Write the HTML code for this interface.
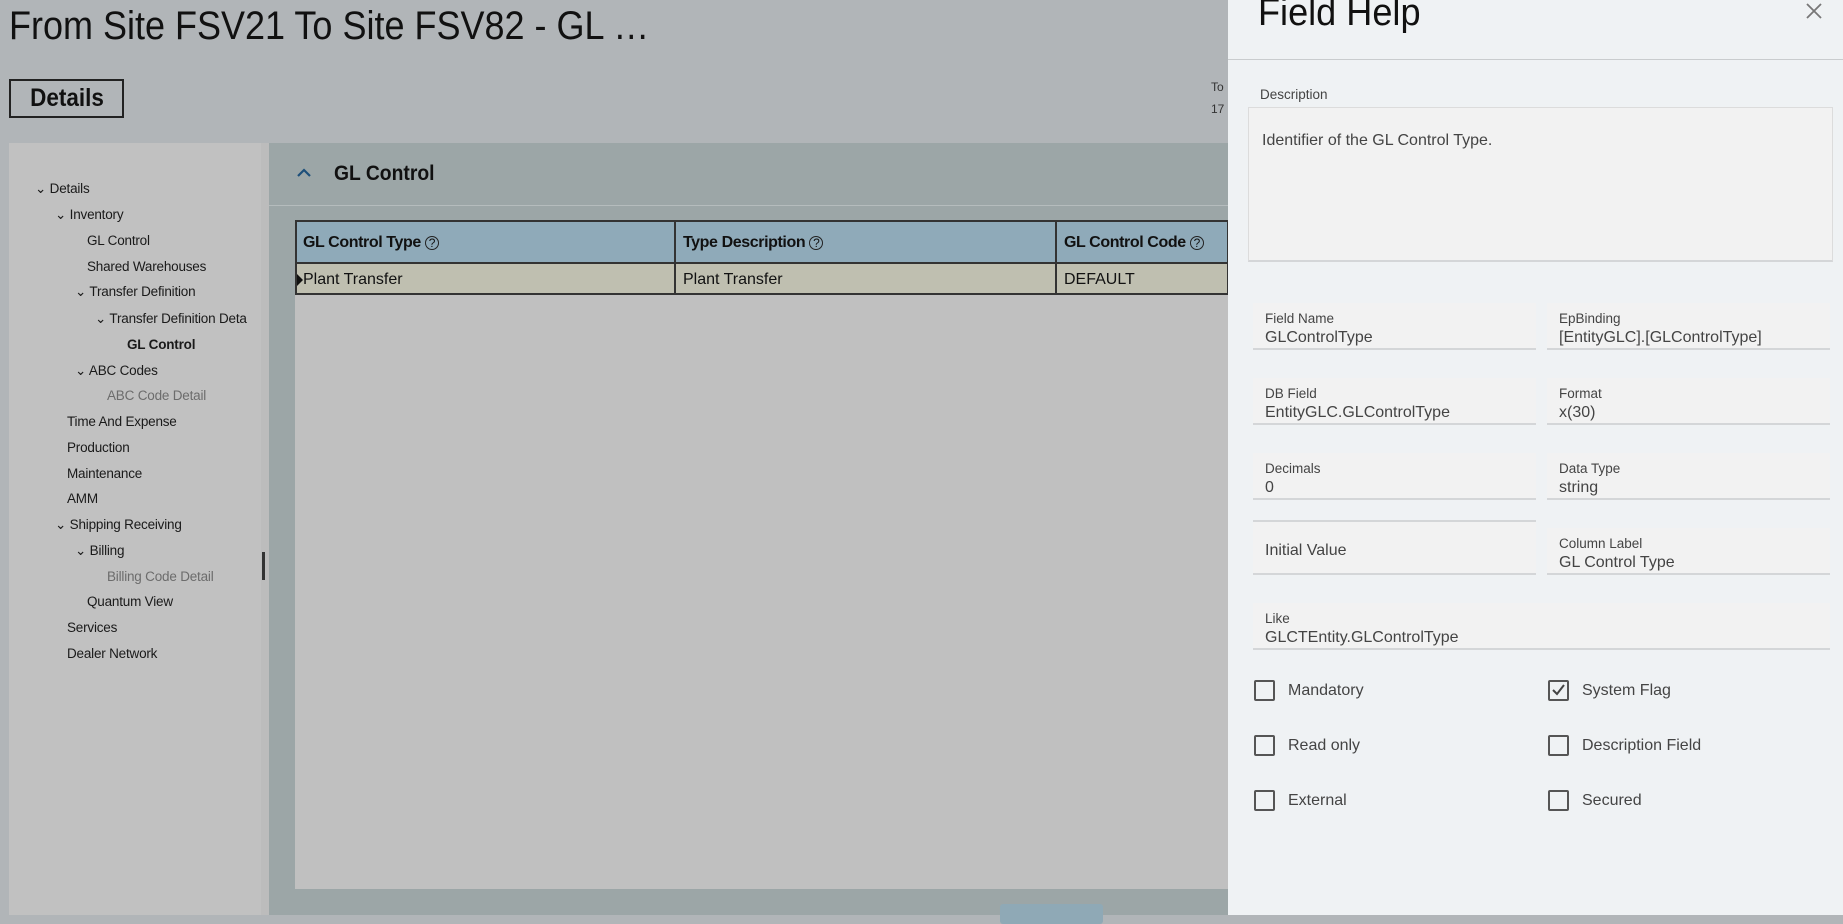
<!DOCTYPE html>
<html><head><meta charset="utf-8"><style>
*{margin:0;padding:0;box-sizing:border-box}
body{width:1843px;height:915px;overflow:hidden;background:#b1b5b8;font-family:"Liberation Sans",sans-serif;position:relative;color:#111}
.a{position:absolute;white-space:nowrap}
.t{font-size:13.5px;color:#1a1a1a;letter-spacing:-0.2px}
.g{color:#6c6c6c}
.fb{position:absolute;background:#f2f2f2;border-bottom:2px solid #d4d6d8;height:47px}
.fb .l{position:absolute;left:12px;top:8px;font-size:13.5px;color:#444}
.fb .v{position:absolute;left:12px;top:26px;font-size:16px;color:#444}
.cb{position:absolute;width:21px;height:21px;border:2px solid #555;border-radius:2px}
.cl{position:absolute;font-size:16px;color:#444}
.q{font-size:12px;font-weight:normal;border:1px solid #222;border-radius:50%;display:inline-block;width:14px;height:14px;line-height:12px;text-align:center}
</style></head><body>
<div class="a" style="left:9px;top:4px;font-size:40px;color:#111;transform:scaleX(0.9);transform-origin:0 0">From Site FSV21 To Site FSV82 - GL …</div>
<div class="a" style="left:9px;top:79px;width:115px;height:39px;border:2px solid #222;font-size:25px;font-weight:bold;text-align:center;line-height:34px"><span style="display:inline-block;transform:scaleX(0.9)">Details</span></div>
<div class="a" style="left:1211px;top:80px;font-size:12px;color:#333">To</div>
<div class="a" style="left:1211px;top:102px;font-size:12px;color:#333">17</div>

<div class="a" style="left:9px;top:143px;width:252px;height:772px;background:#c1c1c1"></div>
<div class="a" style="left:261px;top:143px;width:8px;height:772px;background:#bcbcbc"></div>
<div class="a" style="left:262px;top:552px;width:3px;height:28px;background:#333"></div>
<div class="a" style="left:269px;top:143px;width:960px;height:772px;background:#9ca6a7"></div>
<div class="a" style="left:269px;top:205px;width:960px;height:1px;background:#b5bcbd"></div>
<svg class="a" style="left:296px;top:167px" width="16" height="12"><path d="M2 9 L8 3 L14 9" stroke="#1d4f7a" stroke-width="2.2" fill="none"/></svg>
<div class="a" style="left:334px;top:162px;font-size:21px;font-weight:bold;color:#111;transform:scaleX(0.92);transform-origin:0 0">GL Control</div>
<div class="a" style="left:295px;top:220px;width:934px;height:669px;background:#c0c0c0"></div>
<div class="a" style="left:295px;top:220px;width:934px;height:44px;background:#8faab9;border:2px solid #333"></div>
<div class="a" style="left:295px;top:264px;width:934px;height:31px;background:#bfbfb0;border:2px solid #333;border-top:none"></div>
<div class="a" style="left:674px;top:220px;width:2px;height:75px;background:#333"></div>
<div class="a" style="left:1055px;top:220px;width:2px;height:75px;background:#333"></div>
<div class="a" style="left:303px;top:234px;font-size:16px;font-weight:bold;letter-spacing:-0.4px">GL Control Type <span class="q">?</span></div>
<div class="a" style="left:683px;top:234px;font-size:16px;font-weight:bold;letter-spacing:-0.4px">Type Description <span class="q">?</span></div>
<div class="a" style="left:1064px;top:234px;font-size:16px;font-weight:bold;letter-spacing:-0.4px">GL Control Code <span class="q">?</span></div>
<div class="a" style="left:297px;top:274px;width:0;height:0;border-left:6px solid #111;border-top:6px solid transparent;border-bottom:6px solid transparent"></div>
<div class="a" style="left:303px;top:271px;font-size:16px">Plant Transfer</div>
<div class="a" style="left:683px;top:271px;font-size:16px">Plant Transfer</div>
<div class="a" style="left:1064px;top:271px;font-size:16px">DEFAULT</div>
<div class="a" style="left:1000px;top:904px;width:103px;height:20px;background:#8fa9b6;border-radius:3px"></div>

<div class="a t" style="left:35px;top:181px">⌄ Details</div>
<div class="a t" style="left:55px;top:207px">⌄ Inventory</div>
<div class="a t" style="left:87px;top:233px">GL Control</div>
<div class="a t" style="left:87px;top:259px">Shared Warehouses</div>
<div class="a t" style="left:75px;top:284px">⌄ Transfer Definition</div>
<div class="a t" style="left:95px;top:311px">⌄ Transfer Definition Deta</div>
<div class="a t" style="left:127px;top:337px;font-weight:bold">GL Control</div>
<div class="a t" style="left:75px;top:363px">⌄ ABC Codes</div>
<div class="a t g" style="left:107px;top:388px">ABC Code Detail</div>
<div class="a t" style="left:67px;top:414px">Time And Expense</div>
<div class="a t" style="left:67px;top:440px">Production</div>
<div class="a t" style="left:67px;top:466px">Maintenance</div>
<div class="a t" style="left:67px;top:491px">AMM</div>
<div class="a t" style="left:55px;top:517px">⌄ Shipping Receiving</div>
<div class="a t" style="left:75px;top:543px">⌄ Billing</div>
<div class="a t g" style="left:107px;top:569px">Billing Code Detail</div>
<div class="a t" style="left:87px;top:594px">Quantum View</div>
<div class="a t" style="left:67px;top:620px">Services</div>
<div class="a t" style="left:67px;top:646px">Dealer Network</div>

<div class="a" style="left:1228px;top:0;width:615px;height:915px;background:#eff2f4"></div>
<div class="a" style="left:1258px;top:-8px;font-size:38px;color:#111;transform:scaleX(0.95);transform-origin:0 0">Field Help</div>
<svg class="a" style="left:1806px;top:3px" width="16" height="16"><path d="M1 1 L15 15 M15 1 L1 15" stroke="#777" stroke-width="1.8"/></svg>
<div class="a" style="left:1228px;top:59px;width:615px;height:1px;background:#c9ccce"></div>
<div class="a" style="left:1260px;top:87px;font-size:13.5px;color:#444">Description</div>
<div class="a" style="left:1248px;top:107px;width:585px;height:155px;background:#f2f2f2;border:1px solid #dcdcdc;border-bottom:2px solid #d4d6d8"></div>
<div class="a" style="left:1262px;top:132px;font-size:16px;color:#444">Identifier of the GL Control Type.</div>

<div class="fb" style="left:1253px;top:303px;width:283px"><div class="l">Field Name</div><div class="v">GLControlType</div></div>
<div class="fb" style="left:1547px;top:303px;width:283px"><div class="l">EpBinding</div><div class="v">[EntityGLC].[GLControlType]</div></div>
<div class="fb" style="left:1253px;top:378px;width:283px"><div class="l">DB Field</div><div class="v">EntityGLC.GLControlType</div></div>
<div class="fb" style="left:1547px;top:378px;width:283px"><div class="l">Format</div><div class="v">x(30)</div></div>
<div class="fb" style="left:1253px;top:453px;width:283px"><div class="l">Decimals</div><div class="v">0</div></div>
<div class="fb" style="left:1547px;top:453px;width:283px"><div class="l">Data Type</div><div class="v">string</div></div>
<div class="fb" style="left:1253px;top:520px;width:283px;height:55px;border-top:2px solid #d4d6d8"><div class="v" style="top:20px">Initial Value</div></div>
<div class="fb" style="left:1547px;top:528px;width:283px"><div class="l">Column Label</div><div class="v">GL Control Type</div></div>
<div class="fb" style="left:1253px;top:603px;width:577px"><div class="l">Like</div><div class="v">GLCTEntity.GLControlType</div></div>

<div class="cb" style="left:1254px;top:680px"></div><div class="cl" style="left:1288px;top:682px">Mandatory</div>
<div class="cb" style="left:1548px;top:680px"><svg width="17" height="17" style="position:absolute;left:0;top:0"><path d="M3 8 L7 12 L14 3" stroke="#444" stroke-width="2" fill="none"/></svg></div><div class="cl" style="left:1582px;top:682px">System Flag</div>
<div class="cb" style="left:1254px;top:735px"></div><div class="cl" style="left:1288px;top:737px">Read only</div>
<div class="cb" style="left:1548px;top:735px"></div><div class="cl" style="left:1582px;top:737px">Description Field</div>
<div class="cb" style="left:1254px;top:790px"></div><div class="cl" style="left:1288px;top:792px">External</div>
<div class="cb" style="left:1548px;top:790px"></div><div class="cl" style="left:1582px;top:792px">Secured</div>
</body></html>
